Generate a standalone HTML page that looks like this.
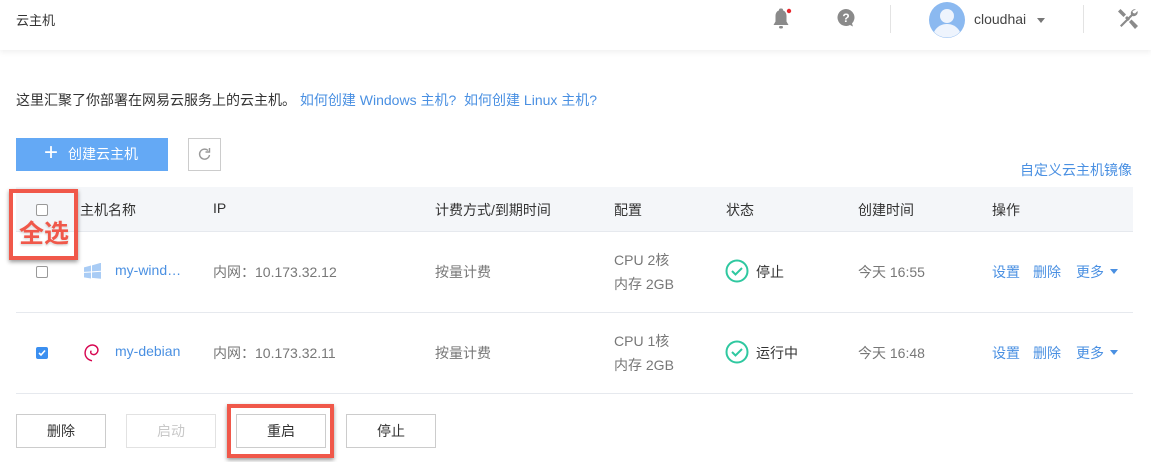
<!DOCTYPE html>
<html><head><meta charset="utf-8">
<style>
*{margin:0;padding:0;box-sizing:border-box}
body{width:1151px;height:462px;background:#fff;font-family:"Liberation Sans","Noto Sans CJK SC",sans-serif;font-size:14px;color:#333;position:relative;overflow:hidden}
.a{position:absolute;white-space:nowrap}
.hdr{position:absolute;left:0;top:0;width:1151px;height:50px;background:#fff;box-shadow:0 2px 6px rgba(0,0,0,0.07)}
.lnk{color:#4a90e2}
.g{color:#777}
.btn{position:absolute;border:1px solid #ccc;background:#fff;text-align:center;line-height:32px;height:34px;width:90px;font-size:14px;color:#333}
.cb{position:absolute;width:12px;height:12px;border:1px solid #999;border-radius:2px;background:#fff}
.line{position:absolute;left:16px;width:1117px;height:1px;background:#e6e9ee}
</style></head><body>
<div class="hdr"></div>
<div class="a" style="left:16px;top:10px;font-size:13px;color:#333">云主机</div>
<svg class="a" style="left:770px;top:7px" width="24" height="24" viewBox="0 0 24 24"><path d="M11 3c-3.5 0-5.5 2.5-5.5 6v5.5L3.5 18h15l-2-3.5V9C16.5 5.5 14.5 3 11 3z" fill="#8a8a8a"/><rect x="9" y="1.5" width="4" height="3" rx="1.5" fill="#8a8a8a"/><rect x="9" y="19" width="4" height="2.5" rx="1.2" fill="#8a8a8a"/><circle cx="19" cy="4" r="2.2" fill="#e8262d"/></svg>
<svg class="a" style="left:836px;top:8px" width="20" height="20" viewBox="0 0 20 20"><path d="M10 1a8.5 8.5 0 1 0 4 16l3 1.5-1-3A8.5 8.5 0 0 0 10 1z" fill="#8a8a8a"/><text x="10" y="14" text-anchor="middle" font-size="12" font-weight="bold" fill="#fff" font-family="Liberation Sans">?</text></svg>
<div class="a" style="left:890px;top:5px;width:1px;height:28px;background:#e3e3e3"></div>
<svg class="a" style="left:929px;top:2px" width="36" height="36" viewBox="0 0 36 36"><circle cx="18" cy="18" r="18" fill="#8bb9f0"/><circle cx="18" cy="14" r="7" fill="#eef4fd"/><path d="M5 30c3-6 8-8 13-8s10 2 13 8a18 18 0 0 1-26 0z" fill="#eef4fd"/></svg>
<div class="a" style="left:974px;top:11px;font-size:14px;color:#444">cloudhai</div>
<div class="a" style="left:1037px;top:18px;width:0;height:0;border-left:4px solid transparent;border-right:4px solid transparent;border-top:5px solid #777"></div>
<div class="a" style="left:1083px;top:5px;width:1px;height:28px;background:#e3e3e3"></div>
<svg class="a" style="left:1116px;top:7px" width="24" height="24" viewBox="0 0 24 24"><g fill="#8a8a8a"><path d="M2 4.5L4.5 2 10 7.5 7.5 10z"/><path d="M9 11l2-2 3 3-2 2z"/><path d="M13 15l2.5-2.5L22 19l-3 3z"/><path d="M20 2.5a4 4 0 0 0-5 5L4 18.5 5.5 20l11-11a4 4 0 0 0 5-5l-2.5 2.5-2-.5-.5-2z"/></g></svg>

<div class="a" style="left:16px;top:90px;color:#333">这里汇聚了你部署在网易云服务上的云主机。 <span class="lnk">如何创建 Windows 主机?</span> &nbsp;<span class="lnk">如何创建 Linux 主机?</span></div>

<div class="a" style="left:16px;top:138px;width:152px;height:33px;background:#64a9f5;color:#fff;font-size:14px;line-height:33px"><span style="font-size:24px;position:absolute;left:28px;top:-2px;font-weight:300">+</span><span style="position:absolute;left:52px">创建云主机</span></div>
<div class="a" style="left:188px;top:138px;width:33px;height:33px;border:1px solid #ccc"></div>
<svg class="a" style="left:196px;top:146px" width="17" height="17" viewBox="0 0 17 17"><path d="M13.5 9a5 5 0 1 1-1.5-4.5" fill="none" stroke="#999" stroke-width="1.4"/><path d="M13.5 2v4h-4" fill="none" stroke="#999" stroke-width="1.4"/></svg>
<div class="a lnk" style="left:1020px;top:160px">自定义云主机镜像</div>

<div class="a" style="left:16px;top:187px;width:1117px;height:44px;background:#f4f6f9"></div>
<div class="line" style="top:231px"></div>
<div class="line" style="top:312px"></div>
<div class="line" style="top:393px"></div>

<div class="cb" style="left:36px;top:204px"></div>
<div class="a" style="left:80px;top:200px">主机名称</div>
<div class="a" style="left:213px;top:200px">IP</div>
<div class="a" style="left:435px;top:200px">计费方式/到期时间</div>
<div class="a" style="left:614px;top:200px">配置</div>
<div class="a" style="left:726px;top:200px">状态</div>
<div class="a" style="left:858px;top:200px">创建时间</div>
<div class="a" style="left:992px;top:200px">操作</div>

<div class="a" style="left:9px;top:189px;width:69px;height:71px;border:4px solid #f0584a;box-shadow:0 2px 4px rgba(0,0,0,0.4)"></div>
<div class="a" style="left:19px;top:219px;font-size:25px;line-height:30px;font-weight:bold;color:#f0584a;text-shadow:0 0 3px #fff,0 1px 2px rgba(0,0,0,.3)">全选</div>

<div class="cb" style="left:36px;top:266px"></div>
<svg class="a" style="left:83px;top:263px" width="19" height="16" viewBox="0 0 19 16"><path d="M1 3.5l7-1.5v6H1z M9 2l9-2v8H9z M1 9h7v6l-7-1.5z M9 9h9v7l-9-1.5z" fill="#a9ccf5" transform="skewY(-4) translate(0,1)"/></svg>
<div class="a lnk" style="left:115px;top:262px">my-wind…</div>
<div class="a g" style="left:213px;top:262px">内网：10.173.32.12</div>
<div class="a g" style="left:435px;top:262px">按量计费</div>
<div class="a g" style="left:614px;top:250px">CPU 2核</div>
<div class="a g" style="left:614px;top:274px">内存 2GB</div>
<svg class="a" style="left:725px;top:259px" width="24" height="24"><circle cx="12" cy="12" r="10.5" fill="none" stroke="#2fc8a0" stroke-width="2"/><path d="M7 12l3.5 3.5L17 9" fill="none" stroke="#2fc8a0" stroke-width="2"/></svg>
<div class="a" style="left:756px;top:262px">停止</div>
<div class="a g" style="left:858px;top:262px">今天 16:55</div>
<div class="a lnk" style="left:992px;top:262px">设置</div>
<div class="a lnk" style="left:1033px;top:262px">删除</div>
<div class="a lnk" style="left:1076px;top:262px">更多</div>
<div class="a" style="left:1110px;top:269px;border-left:4px solid transparent;border-right:4px solid transparent;border-top:5px solid #4a90e2"></div>

<div class="a" style="left:36px;top:347px;width:12px;height:12px;border-radius:2px;background:#3b8ff0"></div>
<svg class="a" style="left:36px;top:347px" width="12" height="12"><path d="M3 6l2 2 4-4.5" fill="none" stroke="#fff" stroke-width="1.6"/></svg>
<svg class="a" style="left:83px;top:342px" width="18" height="21" viewBox="0 0 16 19"><path d="M8 17C3 16 1 12 2 8 3 4 7 2 10 3c3 1 4 4 3 6-1 2-3 3-5 2-1.5-.8-1.5-2.5-.5-3" fill="none" stroke="#d70751" stroke-width="1.3"/></svg>
<div class="a lnk" style="left:115px;top:343px">my-debian</div>
<div class="a g" style="left:213px;top:343px">内网：10.173.32.11</div>
<div class="a g" style="left:435px;top:343px">按量计费</div>
<div class="a g" style="left:614px;top:331px">CPU 1核</div>
<div class="a g" style="left:614px;top:355px">内存 2GB</div>
<svg class="a" style="left:725px;top:340px" width="24" height="24"><circle cx="12" cy="12" r="10.5" fill="none" stroke="#2fc8a0" stroke-width="2"/><path d="M7 12l3.5 3.5L17 9" fill="none" stroke="#2fc8a0" stroke-width="2"/></svg>
<div class="a" style="left:756px;top:343px">运行中</div>
<div class="a g" style="left:858px;top:343px">今天 16:48</div>
<div class="a lnk" style="left:992px;top:343px">设置</div>
<div class="a lnk" style="left:1033px;top:343px">删除</div>
<div class="a lnk" style="left:1076px;top:343px">更多</div>
<div class="a" style="left:1110px;top:350px;border-left:4px solid transparent;border-right:4px solid transparent;border-top:5px solid #4a90e2"></div>

<div class="btn" style="left:16px;top:414px">删除</div>
<div class="btn" style="left:126px;top:414px;border-color:#e2e2e2;color:#c8c8c8">启动</div>
<div class="a" style="left:227px;top:404px;width:107px;height:54px;border:4px solid #f0584a;box-shadow:0 2px 4px rgba(0,0,0,0.4)"></div>
<div class="btn" style="left:236px;top:414px">重启</div>
<div class="btn" style="left:346px;top:414px">停止</div>
</body></html>
